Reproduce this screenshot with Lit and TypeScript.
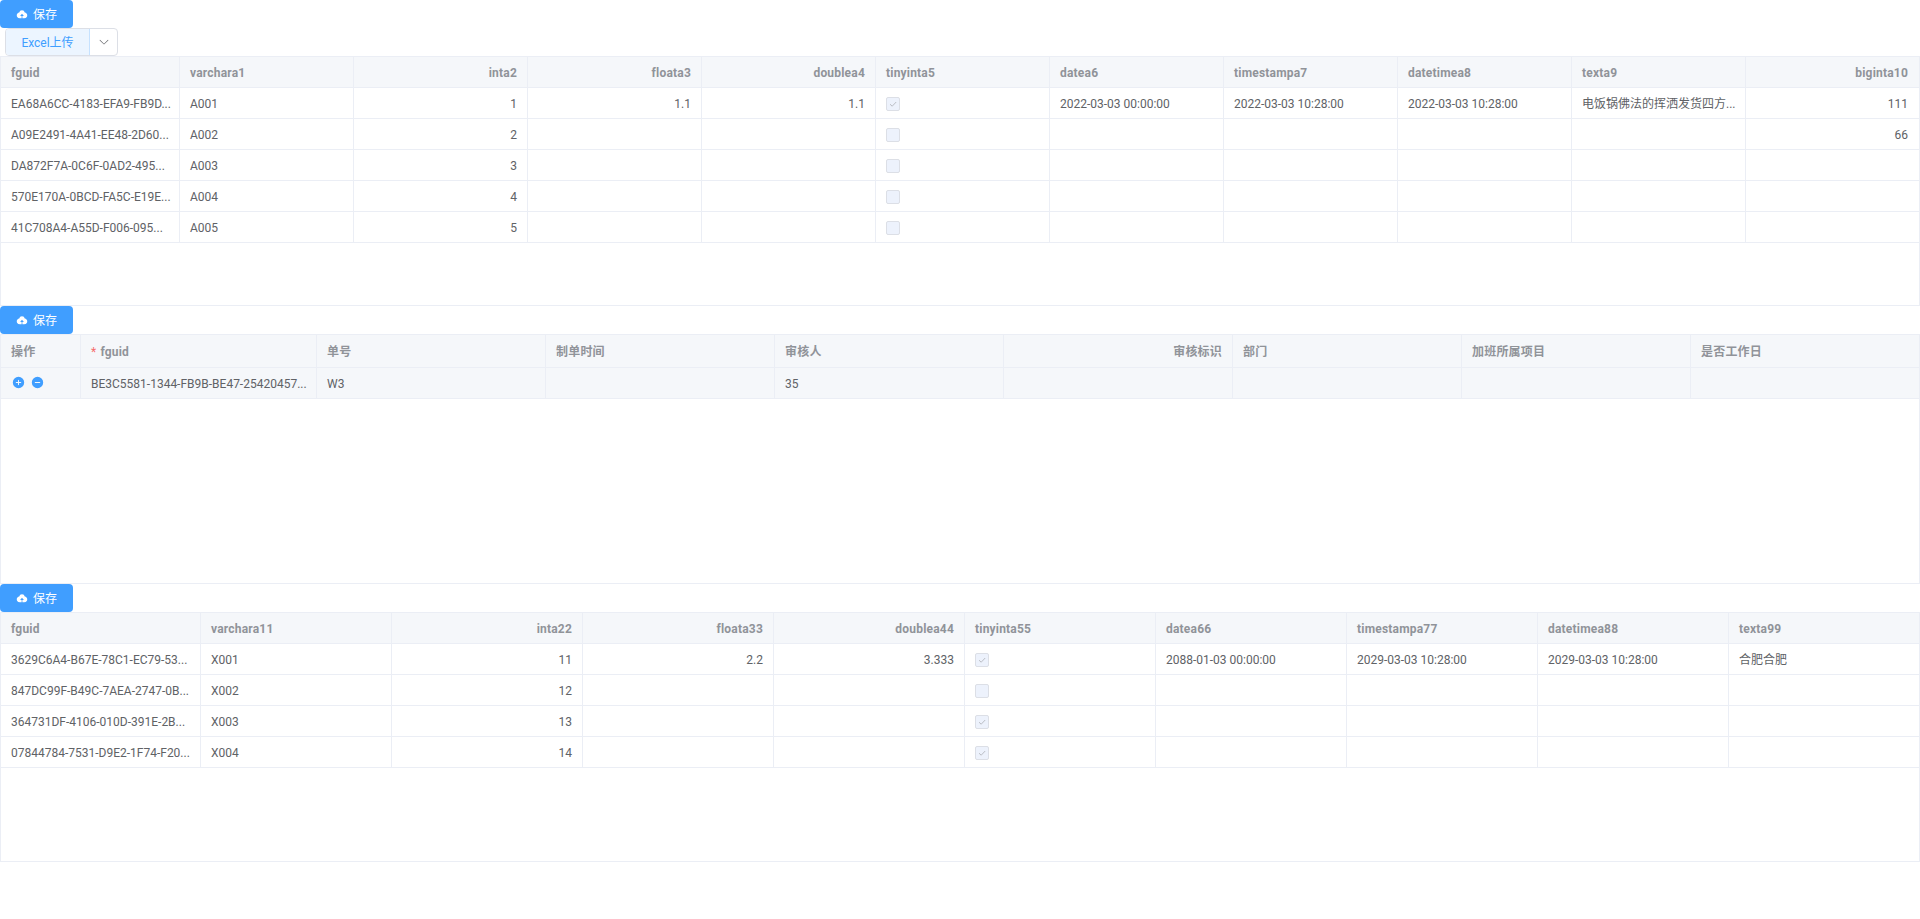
import { LitElement, html, css, svg } from "lit";
import { customElement } from "lit/decorators.js";

type Align = "l" | "r";
interface Col { t: string; w: number; a?: Align; req?: boolean }
type Cell = string | { check: boolean } | { ops: true };
interface Sheet { cols: Col[]; rows: Cell[][]; hh: string; tint?: boolean }

const ck = (v: boolean) => ({ check: v });

const t1: Sheet = {
  hh: "h31",
  cols: [
    { t: "fguid", w: 179 }, { t: "varchara1", w: 174 }, { t: "inta2", w: 174, a: "r" }, { t: "floata3", w: 174, a: "r" },
    { t: "doublea4", w: 174, a: "r" }, { t: "tinyinta5", w: 174 }, { t: "datea6", w: 174 }, { t: "timestampa7", w: 174 },
    { t: "datetimea8", w: 174 }, { t: "texta9", w: 174 }, { t: "biginta10", w: 172, a: "r" },
  ],
  rows: [
    ["EA68A6CC-4183-EFA9-FB9D...", "A001", "1", "1.1", "1.1", ck(true), "2022-03-03 00:00:00", "2022-03-03 10:28:00", "2022-03-03 10:28:00", "电饭锅佛法的挥洒发货四方...", "111"],
    ["A09E2491-4A41-EE48-2D60...", "A002", "2", "", "", ck(false), "", "", "", "", "66"],
    ["DA872F7A-0C6F-0AD2-495...", "A003", "3", "", "", ck(false), "", "", "", "", ""],
    ["570E170A-0BCD-FA5C-E19E...", "A004", "4", "", "", ck(false), "", "", "", "", ""],
    ["41C708A4-A55D-F006-095...", "A005", "5", "", "", ck(false), "", "", "", "", ""],
  ],
};

const t2: Sheet = {
  hh: "h33",
  tint: true,
  cols: [
    { t: "操作", w: 80 }, { t: "fguid", w: 236, req: true }, { t: "单号", w: 229 }, { t: "制单时间", w: 229 },
    { t: "审核人", w: 229 }, { t: "审核标识", w: 229, a: "r" }, { t: "部门", w: 229 }, { t: "加班所属项目", w: 229 }, { t: "是否工作日", w: 227 },
  ],
  rows: [[{ ops: true }, "BE3C5581-1344-FB9B-BE47-25420457...", "W3", "", "35", "", "", "", ""]],
};

const t3: Sheet = {
  hh: "h31",
  cols: [
    { t: "fguid", w: 200 }, { t: "varchara11", w: 191 }, { t: "inta22", w: 191, a: "r" }, { t: "floata33", w: 191, a: "r" },
    { t: "doublea44", w: 191, a: "r" }, { t: "tinyinta55", w: 191 }, { t: "datea66", w: 191 }, { t: "timestampa77", w: 191 },
    { t: "datetimea88", w: 191 }, { t: "texta99", w: 190 },
  ],
  rows: [
    ["3629C6A4-B67E-78C1-EC79-53...", "X001", "11", "2.2", "3.333", ck(true), "2088-01-03 00:00:00", "2029-03-03 10:28:00", "2029-03-03 10:28:00", "合肥合肥"],
    ["847DC99F-B49C-7AEA-2747-0B...", "X002", "12", "", "", ck(false), "", "", "", ""],
    ["364731DF-4106-010D-391E-2B...", "X003", "13", "", "", ck(true), "", "", "", ""],
    ["07844784-7531-D9E2-1F74-F20...", "X004", "14", "", "", ck(true), "", "", "", ""],
  ],
};

const I = {
  upload: svg`<path fill="currentColor" d="M544 864V672h128L512 480 352 672h128v192H320v-1.6c-5.376.32-10.496 1.6-16 1.6A240 240 0 0 1 64 624c0-123.136 93.12-223.488 212.608-237.248A239.808 239.808 0 0 1 512 192a239.872 239.872 0 0 1 235.456 194.752c119.488 13.76 212.48 114.112 212.48 237.248a240 240 0 0 1-240 240c-5.376 0-10.56-1.28-16-1.6v1.6H544z"/>`,
  plus: svg`<path fill="currentColor" d="M512 64a448 448 0 1 1 0 896 448 448 0 0 1 0-896zm-38.4 409.6H326.4a38.4 38.4 0 1 0 0 76.8h147.2v147.2a38.4 38.4 0 0 0 76.8 0V550.4h147.2a38.4 38.4 0 0 0 0-76.8H550.4V326.4a38.4 38.4 0 1 0-76.8 0v147.2z"/>`,
  minus: svg`<path fill="currentColor" d="M512 64a448 448 0 1 1 0 896 448 448 0 0 1 0-896zM288 512a38.4 38.4 0 0 0 38.4 38.4h371.2a38.4 38.4 0 0 0 0-76.8H326.4A38.4 38.4 0 0 0 288 512z"/>`,
  down: svg`<path fill="currentColor" d="M831.872 340.864 512 652.672 192.128 340.864a30.592 30.592 0 0 0-42.752 0 29.12 29.12 0 0 0 0 41.6L489.664 714.24a32 32 0 0 0 44.672 0l340.288-331.712a29.12 29.12 0 0 0 0-41.728 30.592 30.592 0 0 0-42.752 0z"/>`,
};
const icon = (p: unknown, cls: string) => html`<svg class=${cls} viewBox="0 0 1024 1024">${p}</svg>`;

@customElement("app-root")
export class AppRoot extends LitElement {
  static styles = css`
    :host {
      display: block;
      width: 1920px;
      font-family: Roboto, "Noto Sans CJK SC", sans-serif;
      font-size: 12px;
      line-height: 16px;
      color: #606266;
    }
    .btn {
      display: flex;
      align-items: center;
      width: 73px;
      height: 28px;
      box-sizing: border-box;
      padding-left: 16px;
      gap: 5px;
      background: #409eff;
      color: #fff;
      border-radius: 4px;
    }
    .btn-label { padding-top: 1px; }
    .i-up { width: 12px; height: 12px; flex: none; }
    .split {
      display: flex;
      width: 113px;
      height: 28px;
      margin-left: 5px;
      box-sizing: border-box;
      border: 1px solid #dcdfe6;
      border-radius: 4px;
    }
    .split-main {
      width: 84px;
      box-sizing: border-box;
      padding-top: 1px;
      display: flex;
      align-items: center;
      justify-content: center;
      background: #ecf5ff;
      color: #409eff;
      border-right: 1px solid #c6e2ff;
      border-radius: 3px 0 0 3px;
    }
    .split-arrow { flex: 1; display: flex; align-items: center; justify-content: center; }
    .i-down { width: 12px; height: 12px; color: #606266; }
    .sheet {
      height: 250px;
      box-sizing: border-box;
      border: 1px solid #ebeef5;
      overflow: hidden;
    }
    .row { display: grid; border-bottom: 1px solid #ebeef5; box-sizing: border-box; }
    .row.tint { background: #f5f7fa; }
    .head { background: #f5f7fa; color: #909399; font-weight: 700; letter-spacing: 0.2px; }
    .h31 { height: 31px; }
    .h33 { height: 33px; }
    .cell {
      box-sizing: border-box;
      min-width: 0;
      padding: 0 10px;
      display: flex;
      align-items: center;
      border-right: 1px solid #ebeef5;
    }
    .cell:last-child { border-right: 0; }
    .cell.r { justify-content: flex-end; }
    .txt { white-space: nowrap; padding-top: 2px; }
    .req { color: #f56c6c; margin-right: 4px; font-weight: 400; padding-top: 2px; }
    .check {
      width: 14px;
      height: 14px;
      margin-top: 2px;
      box-sizing: border-box;
      border: 1px solid #dcdfe6;
      border-radius: 2px;
      background: #edf2fc;
      display: flex;
      align-items: center;
      justify-content: center;
    }
    .check svg { width: 10px; height: 10px; }
    .ops { display: flex; gap: 6px; padding-left: 1px; margin-top: -1px; }
    .i-op { width: 13px; height: 13px; color: #409eff; }
  `;

  private cell(c: Cell, col: Col) {
    let inner: unknown;
    if (typeof c === "string") inner = html`<span class="txt">${c}</span>`;
    else if ("ops" in c) inner = html`<div class="ops">${icon(I.plus, "i-op")}${icon(I.minus, "i-op")}</div>`;
    else
      inner = html`<div class="check">
        ${c.check
          ? html`<svg viewBox="0 0 10 10"><path d="M2 5.2 4.2 7.2 8.2 3" fill="none" stroke="#b4b7bd" stroke-width="0.9" /></svg>`
          : ""}
      </div>`;
    return html`<div class="cell ${col.a === "r" ? "r" : ""}">${inner}</div>`;
  }

  private sheet(s: Sheet) {
    const tpl = `grid-template-columns:${s.cols.map((c) => c.w + "px").join(" ")}`;
    return html`<div class="sheet">
      <div class="row head ${s.hh}" style=${tpl}>
        ${s.cols.map(
          (c) => html`<div class="cell ${c.a === "r" ? "r" : ""}">
            ${c.req ? html`<span class="req">*</span>` : ""}<span class="txt">${c.t}</span>
          </div>`
        )}
      </div>
      ${s.rows.map(
        (r) => html`<div class="row h31 ${s.tint ? "tint" : ""}" style=${tpl}>${r.map((c, i) => this.cell(c, s.cols[i]))}</div>`
      )}
    </div>`;
  }

  private save() {
    return html`<div class="btn">${icon(I.upload, "i-up")}<span class="btn-label">保存</span></div>`;
  }

  render() {
    return html`
      ${this.save()}
      <div class="split">
        <div class="split-main">Excel上传</div>
        <div class="split-arrow">${icon(I.down, "i-down")}</div>
      </div>
      ${this.sheet(t1)} ${this.save()} ${this.sheet(t2)} ${this.save()} ${this.sheet(t3)}
    `;
  }
}
